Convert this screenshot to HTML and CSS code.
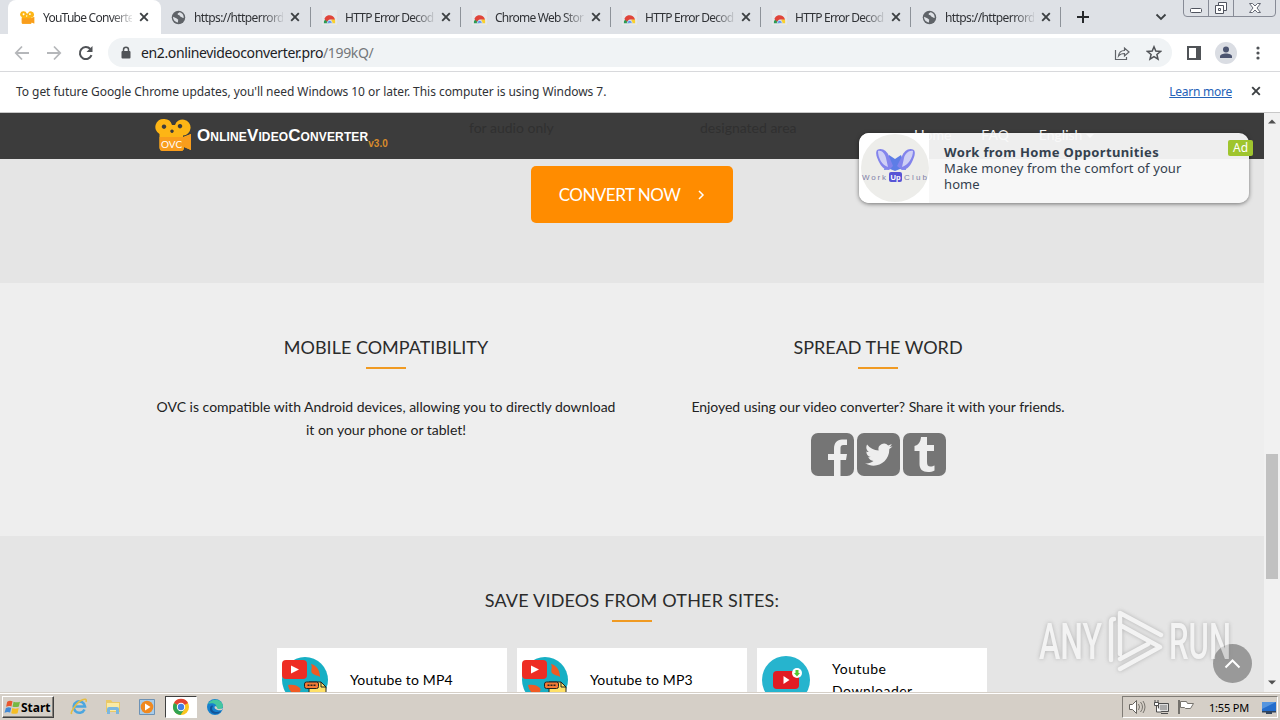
FILE: index.html
```
<!DOCTYPE html>
<html lang="en">
<head>
    <meta charset="UTF-8">
    <meta name="viewport" content="width=device-width, initial-scale=1.0">
    <title>YouTube Converter</title>
    <link rel="stylesheet" href="styles.css">
</head>
<body>
    <!-- shared icons -->
    <svg class="defs" width="0" height="0">
        <symbol id="close" viewBox="0 0 10 10"><path d="M1.2 1.2l7.6 7.6M8.8 1.2L1.2 8.8" fill="none" stroke="currentColor" stroke-width="1.9"/></symbol>
        <symbol id="globe" viewBox="0 0 16 16"><circle cx="8" cy="8" r="7.2" fill="#5f6368"/><path d="M2.2 7.2l4 1.8 1.5 1.4-.4 2.8C4.500 13 2 10.500 2.200 7.200zM8.800 2.300c-.3 1-1.800.8-1.800 2 .1 1.400 2 .8 2.500 2.200.3 1.200 2 .7 2.700 1.800l1.300.2C14 5.200 11.600 2.600 8.800 2.300z" fill="#dee1e6"/></symbol>
        <symbol id="store" viewBox="0 0 16 16"><path d="M0 0h16v16H0z" fill="#e5e7ea"/><path d="M2 14a6 6 0 0 1 2.500-5L8 12.500V14z" fill="#2e9b55"/><path d="M10 10.500l3.500-1.500c.5 1.400.7 3 .5 5h-4z" fill="#fbd02d"/><path d="M2.500 9.500C4 6 6.500 5.500 8 5.500c2.500 0 5 1.500 5.800 4.500H8.500C7 10 6 11 5.500 12.500z" fill="#e0443a"/><path d="M5.500 14a2.700 2.700 0 0 1 5.400 0z" fill="#4c83ea" stroke="#fff" stroke-width=".6"/></symbol>
        <symbol id="camera" viewBox="0 0 38 34"><path fill-rule="evenodd" d="M9 1a8 8 0 0 1 8 6h3a8 8 0 1 1 8 10.500v1.500l8-3v16l-7-3c0 2.500-1 4-3 4H8c-2 0-3.500-1-3.500-3.500V16A8 8 0 0 1 9 1zm0 5.500a2.200 2.200 0 1 0 .01 0zM25 6a2.200 2.200 0 1 0 .01 0zM17 11.500a1.700 1.700 0 1 0 .01 0z" fill="#fdb515"/><path d="M4.500 19H29l7-3v16l-7-3c0 2.500-1 4-3 4H8c-2 0-3.500-1-3.500-3.500z" fill="#f99d1c"/></symbol>
        <symbol id="converter" viewBox="0 0 48 48"><circle cx="24" cy="24" r="23" fill="#17afc4"/><path d="M30 8c5 1 9 6 9 13-2-2-5-1-8-4-2-3 1-5-1-9zM7 29c5-1 9 0 12 3 2 3-2 5-3 9-5-3-8-7-9-12z" fill="#f05a24"/><path d="M28 26h12l5 5v17H28z" fill="#fee067" stroke="#222" stroke-width="1"/><path d="M40 26v5h5" fill="none" stroke="#222" stroke-width="1"/><rect x="23.500" y="26" width="14" height="6.500" rx="2" fill="#f37a35" stroke="#222" stroke-width="1"/><path d="M26.500 29.300h8" stroke="#222" stroke-width="1.400" stroke-dasharray="2 1"/><rect x="1" y="4" width="25" height="19" rx="4" fill="#ee2d24"/><path d="M10 9.500v8l8-4z" fill="#fff"/></symbol>
    </svg>

    <div class="tabs">
        <div class="tab active">
            <svg class="favicon"><use href="#camera"/></svg>
            <span class="title">YouTube Converte</span>
            <svg class="x"><use href="#close"/></svg>
        </div>
        <div class="tab">
            <svg class="favicon"><use href="#globe"/></svg>
            <span class="title">https://httperrord</span>
            <svg class="x"><use href="#close"/></svg>
        </div>
        <div class="tab">
            <svg class="favicon"><use href="#store"/></svg>
            <span class="title">HTTP Error Decod</span>
            <svg class="x"><use href="#close"/></svg>
        </div>
        <div class="tab">
            <svg class="favicon"><use href="#store"/></svg>
            <span class="title">Chrome Web Stor</span>
            <svg class="x"><use href="#close"/></svg>
        </div>
        <div class="tab">
            <svg class="favicon"><use href="#store"/></svg>
            <span class="title">HTTP Error Decod</span>
            <svg class="x"><use href="#close"/></svg>
        </div>
        <div class="tab">
            <svg class="favicon"><use href="#store"/></svg>
            <span class="title">HTTP Error Decod</span>
            <svg class="x"><use href="#close"/></svg>
        </div>
        <div class="tab">
            <svg class="favicon"><use href="#globe"/></svg>
            <span class="title">https://httperrord</span>
            <svg class="x"><use href="#close"/></svg>
        </div>
        <svg class="new-tab" width="14" height="14"><path d="M7 1v12M1 7h12" stroke="#26282b" stroke-width="2"/></svg>
        <svg class="tab-search" width="12" height="8"><path d="M1.500 1.500L6 6l4.500-4.500" fill="none" stroke="#3c4043" stroke-width="1.800"/></svg>
        <svg class="window-buttons" width="94" height="18">
            <path d="M.5 0v13q0 3.500 3.500 3.500h85q3.500 0 3.500-3.500V0M25.500 0v16M50.500 0v16" fill="none" stroke="#878b96"/>
            <rect x="7.500" y="8.500" width="11" height="4" rx="1" fill="#fff" stroke="#50545f"/>
            <path d="M35.500 2.500h8v8h-8z" fill="#fff" stroke="#50545f"/>
            <path d="M32.500 5.500h8v8h-8z" fill="#fff" stroke="#50545f"/><path d="M35.500 8.500h2v2h-2z" fill="none" stroke="#50545f"/>
            <path d="M66.500 3.500h3l2.500 2.500 2.500-2.500h3L74 8l3.500 4.500h-3L72 10l-2.500 2.500h-3L70 8z" fill="#fff" stroke="#656975"/>
        </svg>
    </div>

    <div class="toolbar">
        <svg width="16" height="16"><path d="M15 8H2M8 1.500L1.800 8 8 14.500" fill="none" stroke="#b5b7ba" stroke-width="1.800"/></svg>
        <svg width="16" height="16"><path d="M1 8h13M8 1.500L14.200 8 8 14.500" fill="none" stroke="#b5b7ba" stroke-width="1.800"/></svg>
        <svg width="16" height="16"><path d="M13.500 10.200A6 6 0 1 1 12.300 4" fill="none" stroke="#505357" stroke-width="2"/><path d="M14.500 1v6h-6z" fill="#505357"/></svg>
        <div class="address">
            <svg width="10" height="14"><path d="M2.500 6V3.800a2.500 2.500 0 0 1 5 0V6" fill="none" stroke="#505357" stroke-width="1.500"/><rect x=".5" y="5" width="9" height="7.500" rx="1" fill="#505357"/></svg>
            <span class="url">en2.onlinevideoconverter.pro<span>/199kQ/</span></span>
            <svg width="16" height="16"><path d="M1.500 5v9.500h11V12M4.500 11c.5-4 2.500-5.500 6-5.500V3l4.500 4-4.500 4V8.500c-3 0-4.500.5-6 2.500z" fill="none" stroke="#606368" stroke-width="1.200"/></svg>
            <svg width="16" height="16"><path d="M8 1.800l1.800 4.300 4.700.4-3.600 3 1.100 4.600L8 11.600l-4 2.500 1.100-4.600-3.600-3 4.700-.4z" fill="none" stroke="#505357" stroke-width="1.500"/></svg>
        </div>
        <svg class="panel" width="14" height="14"><path d="M1 1h12v12H1z" fill="none" stroke="#505357" stroke-width="2"/><path d="M9 1h4v12H9z" fill="#505357"/></svg>
        <svg class="profile" width="22" height="22"><circle cx="11" cy="11" r="11" fill="#dadde3"/><circle cx="11" cy="7.500" r="3" fill="#4b5470"/><path d="M5 16v-1.500c0-4 12-4 12 0V16z" fill="#4b5470"/></svg>
        <svg class="menu" width="4" height="14" fill="#505357"><circle cx="2" cy="2" r="1.600"/><circle cx="2" cy="7" r="1.600"/><circle cx="2" cy="12" r="1.600"/></svg>
    </div>

    <div class="infobar">
        <span>To get future Google Chrome updates, you'll need Windows 10 or later. This computer is using Windows 7.</span>
        <a href="#">Learn more</a>
        <svg class="x"><use href="#close"/></svg>
    </div>

    <div class="viewport">
        <div class="page">
            <header>
                <div class="logo">
                    <div class="logo-icon"><svg width="38" height="34"><use href="#camera"/></svg><span>OVC</span></div>
                    <span class="name">OnlineVideoConverter</span><span class="version">v3.0</span>
                </div>
                <span class="ghost ghost-audio">for audio only</span>
                <span class="ghost ghost-area">designated area</span>
                <nav><a>Home</a><a>FAQ</a><a>English <i></i></a></nav>
            </header>

            <section class="convert">
                <button>CONVERT NOW<svg width="8" height="10"><path d="M2 1l4 4-4 4" fill="none" stroke="#fff" stroke-width="1.500"/></svg></button>
            </section>

            <section class="info">
                <div class="column">
                    <h2>MOBILE COMPATIBILITY</h2>
                    <p>OVC is compatible with Android devices, allowing you to directly download<br>it on your phone or tablet!</p>
                </div>
                <div class="column spread">
                    <h2>SPREAD THE WORD</h2>
                    <p>Enjoyed using our video converter? Share it with your friends.</p>
                    <div class="social">
                        <svg width="43" height="43"><rect width="43" height="43" rx="7" fill="#757575"/><path d="M23 43V27h-6v-6h6v-5c0-6 3-9.500 8-9.500h5V12h-3.500c-2.500 0-3 1.500-3 3.500V21H36l-1 6h-5.500v16z" fill="#eee"/></svg>
                        <svg width="43" height="43"><rect width="43" height="43" rx="7" fill="#757575"/><path d="M35.500 13.200c-1 .5-2 .8-3.200.9 1.100-.7 2-1.700 2.400-3-1 .6-2.300 1.100-3.500 1.400a5.600 5.600 0 0 0-9.600 5.100c-4.600-.2-8.800-2.500-11.500-6-1.500 2.600-.7 5.900 1.700 7.500-.9 0-1.800-.3-2.500-.7 0 2.700 1.900 5.100 4.500 5.600-.8.200-1.700.2-2.500.1.700 2.200 2.800 3.800 5.200 3.900-2.300 1.800-5.300 2.700-8.300 2.300 10.500 6.500 24.100-.8 24.100-13.700v-.7c1.200-.8 2.400-1.600 3.200-2.700z" fill="#eee"/></svg>
                        <svg width="43" height="43"><rect width="43" height="43" rx="7" fill="#757575"/><path d="M18 4h6v8h7v6h-7v11c0 3 1 4.500 3.500 4.500 1.500 0 3-.5 4-1v5c-2 1-4 1.500-6.500 1.500-5.500 0-8.500-3-8.500-8V18h-5v-5c4-1 6-4 6.500-9z" fill="#eee"/></svg>
                    </div>
                </div>
            </section>

            <section class="sites">
                <h2>SAVE VIDEOS FROM OTHER SITES:</h2>
                <div class="cards">
                    <div class="card"><svg width="48" height="48"><use href="#converter"/></svg><span>Youtube to MP4</span></div>
                    <div class="card"><svg width="48" height="48"><use href="#converter"/></svg><span>Youtube to MP3</span></div>
                    <div class="card downloader">
                        <svg width="48" height="48"><circle cx="24" cy="24" r="24" fill="#26b4ce"/><rect x="11" y="15" width="26" height="18" rx="4" fill="#e11c24"/><path d="M21.500 20v8l6-4z" fill="#fff"/><circle cx="35" cy="17" r="5" fill="#fff"/><path d="M33.500 14h3v3h1.500l-3 3.500-3-3.500h1.500z" fill="#52c931"/></svg>
                        <span>Youtube<br>Downloader</span>
                    </div>
                </div>
            </section>
        </div>
        <div class="scrollbar">
            <svg width="8" height="5"><path d="M0 4.500L4 .5l4 4z" fill="#505050"/></svg>
            <div class="thumb"></div>
            <svg width="8" height="5"><path d="M0 .5h8l-4 4z" fill="#505050"/></svg>
        </div>

        <div class="ad">
            <svg width="70" height="70">
                <path d="M0 0h70v70H0z" fill="#fff"/><circle cx="36" cy="35" r="34" fill="#ededea"/>
                <path d="M30 22l6 4 6-4 5 15-6-1-5 2-5-2-6 1z" fill="#5d7de6"/>
                <path d="M18 17c5-3 10 1 12 6l4 10-4 4c-5 0-8-4-10-8s-4-9-2-12z" fill="#8384ec"/>
                <path d="M55 17c-5-3-10 1-12 6l-5 10 5 4c5 0 8-4 10-8s4-9 2-12z" fill="#8384ec"/>
                <path d="M19 18c4-1 7 3 8 7l2 9c-6-2-10-9-10-16zM54 18c-4-1-8 3-9 7l-2 9c6-2 11-9 11-16z" fill="#cfd0f5"/>
                <rect x="30" y="39" width="13" height="10" rx="2" fill="#5754d5"/>
                <text x="3" y="47" textLength="24" class="ad-logo">Work</text><text x="31.500" y="47" textLength="10" lengthAdjust="spacingAndGlyphs" class="ad-logo up">Up</text><text x="45" y="47" textLength="23" class="ad-logo">Club</text>
            </svg>
            <div class="ad-text"><b>Work from Home Opportunities</b><span>Make money from the comfort of your<br>home</span></div>
            <span class="badge">Ad</span>
        </div>

        <svg class="scroll-top" width="39" height="39"><circle cx="19.500" cy="19.500" r="19.500" fill="#999"/><path d="M12.500 23.500l7-7 7 7" fill="none" stroke="#fff" stroke-width="2"/></svg>
        <svg class="watermark" width="200" height="66">
            <text x="3" y="51" textLength="63" lengthAdjust="spacingAndGlyphs">ANY</text>
            <g fill="none" stroke="#fff" stroke-width="4.500" stroke-linejoin="round" stroke-linecap="round"><path d="M75 52V14q0-3 3-3M84 46V5l41 22M84 61l40-22-40-22M84 51l28-15"/></g>
            <text x="133" y="51" textLength="62" lengthAdjust="spacingAndGlyphs">RUN</text>
        </svg>
    </div>

    <div class="taskbar">
        <div class="start">
            <svg width="17" height="17" viewBox="0 0 16 16"><path d="M3 2.500c2-1 3-1 5-.3L7 7C5 6.500 4 6.500 2 7.300z" fill="#e9562d"/><path d="M9 2.500c2 .8 4 .8 6 0L14 7c-2 .8-4 .8-6 .2z" fill="#75b843"/><path d="M1.800 8.500c2-1 3-1 5-.3l-1 4.600c-2-.7-3-.7-5.300.2z" fill="#4289d5"/><path d="M7.800 8.500c2 .8 4 .8 6 0l-1 4.800c-2 .8-4 .8-6 0z" fill="#f5bd24"/></svg>
            <b>Start</b>
        </div>
        <div class="launch">
            <div class="app"><svg width="18" height="18"><path d="M14.500 11.500A5.700 5.700 0 1 1 15 8.500H4" fill="none" stroke="#4ca6df" stroke-width="2.600"/><path d="M2 15C-1 18 5 5 12 2c3-1.500 5-1 4 2" fill="none" stroke="#e5bd43" stroke-width="1.500"/></svg></div>
            <div class="app"><svg width="18" height="18"><path d="M2 2h5l1.500 2H16v10H2z" fill="#eac967"/><path d="M3 5h12v8H3z" fill="#faeaa4"/><path d="M3 16v-5q0-2 2-2h8q2 0 2 2v5h-3v-4H6v4z" fill="#7bb7df"/></svg></div>
            <div class="app"><svg width="18" height="18"><path d="M1.500 1.500h15v15h-15z" fill="#a8ccea" stroke="#6d92b5"/><circle cx="9" cy="9" r="6.300" fill="#f08920"/><path d="M7 5.500v7L12.500 9z" fill="#fff"/></svg></div>
            <div class="app open"><svg width="18" height="18"><circle cx="9" cy="9" r="8" fill="#fbc520"/><path d="M9 9L2 5a8 8 0 0 1 14 0z" fill="#e34434"/><path d="M9 9L2 5a8 8 0 0 0 6.500 12l4-6z" fill="#31a352"/><circle cx="9" cy="9" r="4.200" fill="#fff"/><circle cx="9" cy="9" r="3.200" fill="#427fe6"/></svg></div>
            <div class="app"><svg width="18" height="18"><circle cx="9" cy="9" r="8" fill="#1680cd"/><path d="M2 6C5 0 16 0 17 8c0 4-6 4-7 2 2-4-4-6-8-4z" fill="#44c6a0"/><path d="M7 8c-3 4 2 8 8 5-3 5-12 3-11-3 0-2 2-3 3-2z" fill="#135499"/><path d="M9 8c-2 3 3 5 7 4l1-2c-3 2-7 1-6-1z" fill="#d4d0c8"/></svg></div>
        </div>
        <div class="tray">
            <svg width="18" height="16"><path d="M1.500 5.500h3l4-4v13l-4-4h-3z" fill="#fff" stroke="#66645f"/><path d="M10.500 5q2 3 0 6M12.500 3q4 5 0 10M15 2q4 6 0 12" fill="none" stroke="#77746e"/></svg>
            <svg width="17" height="16"><path d="M5.500 4.500h10v8h-10z" fill="#ddd" stroke="#4e4e4e"/><path d="M7 6h7v5H7z" fill="#aaa"/><path d="M8 14.500h7M2 1v3M5 1v3M1.500 3.500h4v3h-4zM3.500 7v6h5" stroke="#4e4e4e" fill="#fff"/></svg>
            <svg width="17" height="16"><path d="M2 1v14" stroke="#55534f" stroke-width="1.500"/><path d="M3.500 2.500h6l1 2h6l-3 5h-5l-1-1h-4z" fill="#fff" stroke="#77746e"/></svg>
            <span>1:55 PM</span>
            <svg width="16" height="15"><path d="M1 2h14v9H1z" fill="#246dcc"/><path d="M1 2h14L1 9z" fill="#5595df"/><path d="M1 11h14v1.500H1zM5 12h6v2H5z" fill="#31445d"/></svg>
        </div>
    </div>
</body>
</html>
```
FILE: styles.css
```
* {
    box-sizing: border-box;
}
body {
    margin: 0;
    width: 1280px;
    height: 720px;
    overflow: hidden;
    display: flex;
    flex-direction: column;
    font-family: "Noto Sans", sans-serif;
    font-size: 12px;
    color: #303236;
}
svg {
    display: block;
    flex: none;
}
.defs {
    position: absolute;
}

/* tabs */
.tabs {
    height: 34px;
    flex: none;
    display: flex;
    align-items: center;
    background: #dee1e6;
    padding-left: 10px;
    position: relative;
}
.tab {
    width: 150px;
    height: 34px;
    display: flex;
    align-items: center;
    padding-left: 11px;
    background: linear-gradient(#8d9299, #8d9299) right center / 1px 20px no-repeat;
}
.tab.active {
    width: 153px;
    margin: 0 0 0 -2px;
    padding-left: 12px;
    background: #fff;
    border-radius: 8px 8px 0 0;
}
.tab.active + .tab {
    padding-left: 10px;
}
.favicon {
    width: 15px;
    height: 15px;
}
.title {
    width: 89px;
    margin-left: 8px;
    white-space: nowrap;
    letter-spacing: -0.75px;
    -webkit-mask-image: linear-gradient(to right, #000 68px, transparent 92px);
    mask-image: linear-gradient(to right, #000 68px, transparent 92px);
}
.tab:nth-child(2) .title,
.tab:nth-child(7) .title {
    letter-spacing: -0.6px;
}
.x {
    width: 10px;
    height: 10px;
    margin-left: 7px;
    color: #3c4043;
}
.new-tab {
    margin-left: 15px;
}
.tab-search {
    margin-left: 65px;
}
.window-buttons {
    position: absolute;
    top: 0;
    right: 3px;
}

/* toolbar */
.toolbar {
    height: 38px;
    flex: none;
    display: flex;
    align-items: center;
    gap: 16px;
    padding: 0 20px 0 14px;
    background: #fff;
    border-bottom: 1px solid #d8d9dc;
}
.address {
    width: 1064px;
    height: 29px;
    margin-left: -2px;
    display: flex;
    align-items: center;
    gap: 16px;
    padding: 0 10px 0 13px;
    border-radius: 15px;
    background: #f0f3f5;
}
.url {
    flex: 1;
    margin-left: -6px;
    font-size: 14px;
    letter-spacing: -0.36px;
    color: #202124;
}
.url span {
    color: #74777b;
}
.panel {
    margin-left: -1px;
}
.profile {
    margin: 0 -2px;
}
.menu {
    margin-left: 5px;
}

/* update notice */
.infobar {
    height: 41px;
    flex: none;
    display: flex;
    align-items: center;
    padding: 0 19px 2px 16px;
    background: #fff;
    border-bottom: 1px solid #c8c8c8;
}
.infobar span {
    flex: 1;
    letter-spacing: -0.05px;
}
.infobar a {
    color: #2462b8;
    letter-spacing: -0.25px;
}
.infobar .x {
    margin-left: 19px;
}

.viewport {
    height: 579px;
    flex: none;
    display: flex;
    overflow: hidden;
    position: relative;
}
.page {
    width: 1264px;
    height: 579px;
    overflow: hidden;
    font-family: Lato, sans-serif;
}

/* site header */
header {
    height: 46px;
    display: flex;
    align-items: center;
    padding-left: 155px;
    background: #3c3c3c;
}
.logo {
    width: 314px;
    display: flex;
    align-items: center;
    font-family: "Liberation Sans", sans-serif;
    font-weight: bold;
}
.logo-icon {
    position: relative;
    top: -1px;
}
.logo-icon span {
    position: absolute;
    left: 6px;
    top: 20px;
    font: 10px Lato, sans-serif;
    color: #fff;
}
.name {
    margin-left: 4px;
    color: #fff;
    font-size: 17px;
    font-variant: small-caps;
    letter-spacing: 0.12px;
}
.version {
    margin-top: 15px;
    font-size: 10px;
    color: #d98b2b;
}
.ghost {
    margin-top: -18px;
    font-size: 14px;
    color: #303030;
}
.ghost-audio {
    width: 231px;
}
.ghost-area {
    width: 214px;
}
nav {
    display: flex;
    gap: 30px;
    margin-top: -3px;
    font-size: 14px;
    color: #fff;
}
nav i {
    display: inline-block;
    margin-bottom: 2px;
    border: 4px solid transparent;
    border-top-color: #fff;
    border-bottom: 0;
}

/* convert button */
.convert {
    height: 124px;
    padding-top: 7px;
    background: #e5e5e5;
}
.convert button {
    width: 202px;
    height: 57px;
    margin: 0 auto;
    display: flex;
    align-items: center;
    justify-content: center;
    gap: 17px;
    border: none;
    border-radius: 5px;
    background: #ff8c00;
    color: #fff;
    font: 17px Lato, sans-serif;
    letter-spacing: -0.5px;
}

/* text columns */
h2 {
    margin: 0;
    font-size: 18px;
    font-weight: normal;
    line-height: 22px;
    text-align: center;
    color: #2b2b2b;
}
h2::after {
    content: "";
    display: block;
    width: 40px;
    height: 2px;
    margin: 9px auto 0;
    background: #f09a22;
}
.info {
    height: 253px;
    display: flex;
    padding: 53px 0 0 141px;
    background: #eee;
}
.column {
    width: 490px;
    text-align: center;
}
.column.spread {
    width: 494px;
}
.column p {
    margin: 26px 0 0;
    font-size: 14px;
    line-height: 23px;
    color: #222;
}
.column.spread p {
    letter-spacing: -0.04px;
}
.social {
    display: flex;
    justify-content: center;
    gap: 3px;
    margin-top: 15px;
}

/* other sites */
.sites {
    height: 156px;
    padding-top: 53px;
    background: #e5e5e5;
}
.sites h2 {
    letter-spacing: 0.2px;
}
.cards {
    display: flex;
    justify-content: center;
    gap: 10px;
    margin-top: 26px;
}
.card {
    width: 230px;
    height: 64px;
    display: flex;
    align-items: center;
    gap: 20px;
    padding-left: 4px;
    background: #fff;
    font-size: 14px;
    line-height: 22px;
    letter-spacing: 0.15px;
    color: #000;
}
.card span {
    margin-left: 1px;
}
.card.downloader {
    gap: 21px;
    padding-left: 5px;
    letter-spacing: 0.5px;
}

/* scrollbar */
.scrollbar {
    width: 16px;
    height: 579px;
    display: flex;
    flex-direction: column;
    align-items: center;
    justify-content: space-between;
    padding: 6px 0 7px;
    background: #f1f1f1;
}
.thumb {
    width: 12px;
    height: 125px;
    margin-top: 329px;
    margin-bottom: 100px;
    background: #c1c1c1;
}

/* ad */
.ad {
    position: absolute;
    left: 859px;
    top: 20px;
    width: 390px;
    height: 70px;
    display: flex;
    border-radius: 10px;
    background: rgba(248, 248, 248, 0.95);
    box-shadow: 0 1px 4px rgba(0, 0, 0, 0.5);
}
.ad > svg {
    border-radius: 10px 0 0 10px;
}
.ad-logo {
    font: 8px "Liberation Sans", sans-serif;
    fill: #8181a8;
}
.ad-logo.up {
    font-weight: bold;
    fill: #fff;
}
.ad-text {
    display: flex;
    flex-direction: column;
    padding: 11px 0 0 15px;
    font-size: 13px;
    line-height: 16px;
    color: #34414e;
}
.ad-text b {
    letter-spacing: 0.35px;
}
.ad-text span {
    letter-spacing: 0.1px;
}
.badge {
    position: absolute;
    right: -4px;
    top: 7px;
    width: 25px;
    height: 16px;
    border-radius: 2px;
    background: #9fc52e;
    color: #fff;
    line-height: 16px;
    text-align: center;
}

.scroll-top {
    position: absolute;
    left: 1213px;
    top: 531px;
}
.watermark {
    position: absolute;
    left: 1036px;
    top: 495px;
    opacity: 0.55;
    filter: drop-shadow(0 0 2px #888);
}
.watermark text {
    font: 500 50px Roboto, sans-serif;
    fill: #fff;
}

/* taskbar */
.taskbar {
    height: 28px;
    flex: none;
    display: flex;
    align-items: center;
    padding: 1px 2px 0;
    background: #d5cfc7;
    border-top: 1px solid #d5cfc7;
    box-shadow: inset 0 1px #fff;
    color: #000;
}
.start {
    width: 52px;
    height: 22px;
    display: flex;
    align-items: center;
    padding-left: 1px;
    border: 1px solid;
    border-color: #fff #404040 #404040 #fff;
    box-shadow: inset -1px -1px #85817b;
}
.launch {
    flex: 1;
    display: flex;
    gap: 2px;
    padding-left: 9px;
}
.app {
    width: 32px;
    height: 22px;
    display: flex;
    align-items: center;
    justify-content: center;
}
.app.open {
    background: #fff;
    border: 1px solid;
    border-color: #404040 #fff #fff #404040;
}
.tray {
    width: 156px;
    height: 22px;
    display: flex;
    align-items: center;
    gap: 7px;
    padding-left: 5px;
    border: 1px solid;
    border-color: #807c76 #fff #fff #807c76;
}
.tray span {
    width: 43px;
    margin: 0 4px 0 8px;
    white-space: nowrap;
    font-size: 11px;
    letter-spacing: -0.2px;
}
```
